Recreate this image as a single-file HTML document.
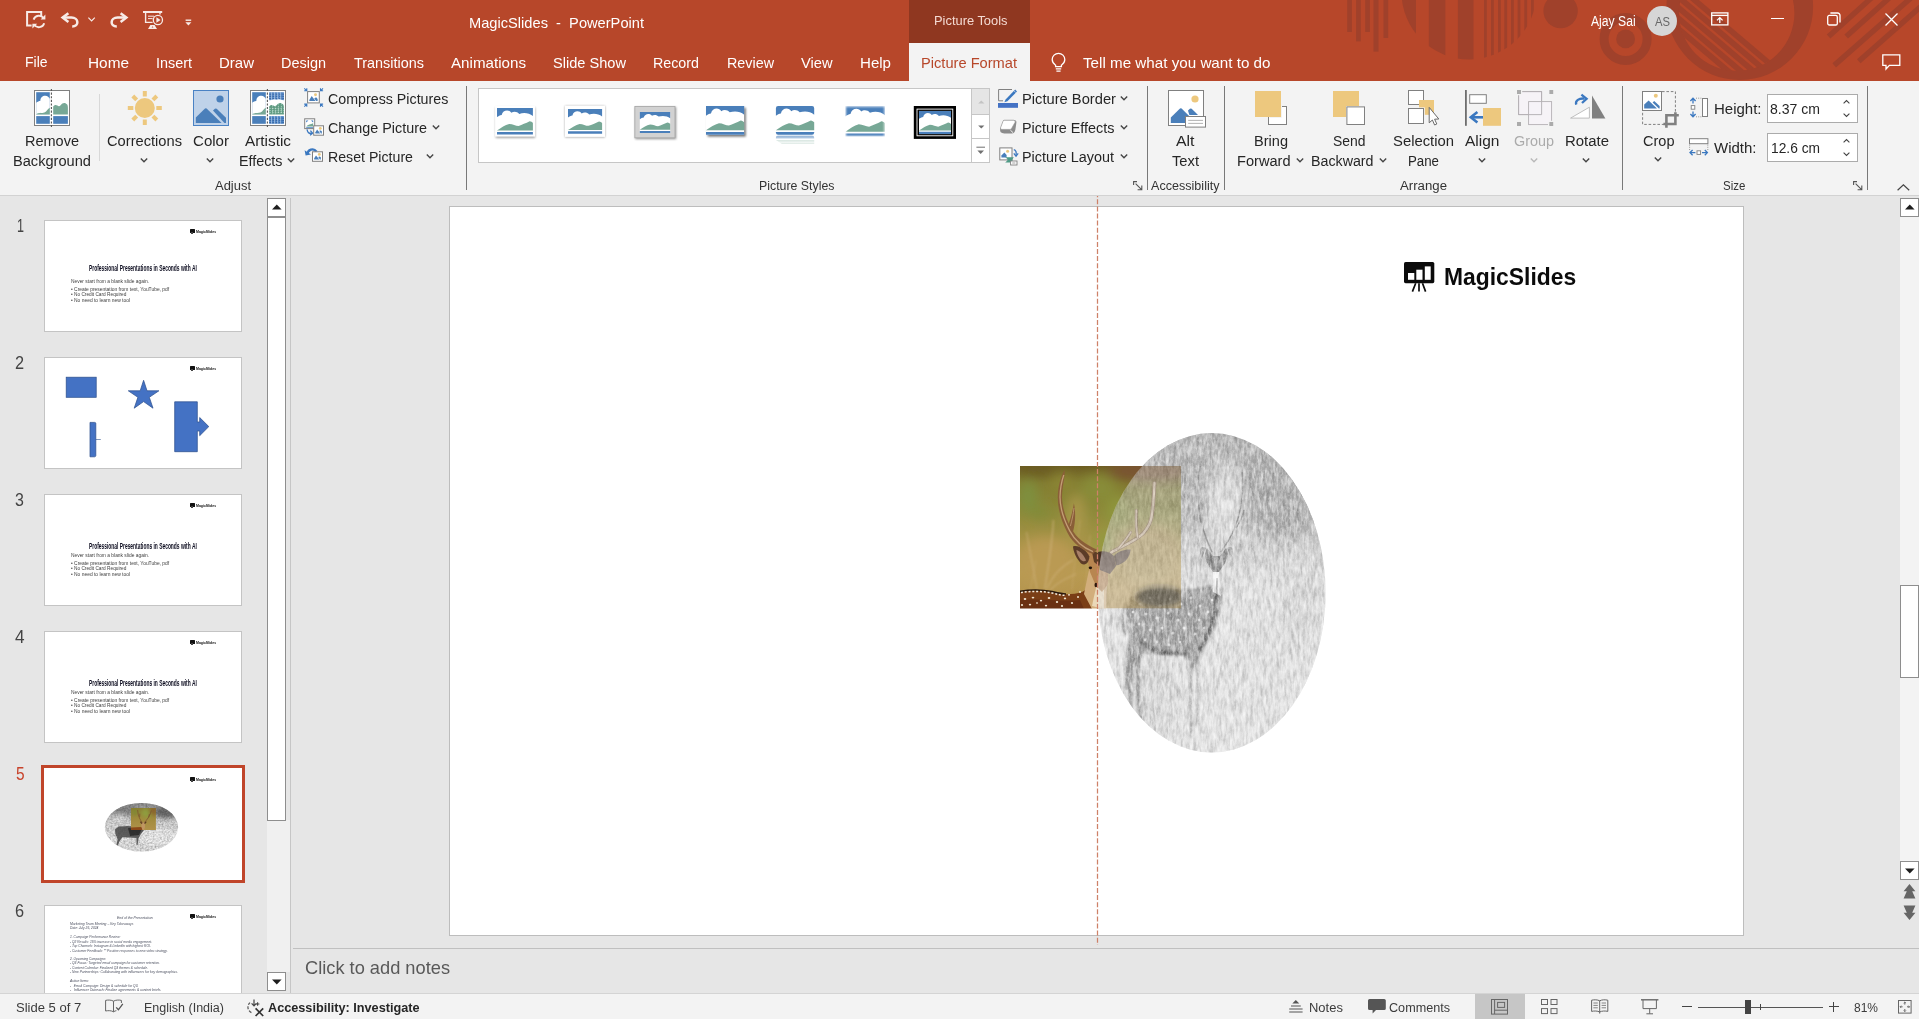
<!DOCTYPE html><html lang="en"><head><meta charset="utf-8"><title>MagicSlides - PowerPoint</title><style>
html,body{margin:0;padding:0;}
body{width:1919px;height:1019px;overflow:hidden;position:relative;background:#E6E6E6;font-family:"Liberation Sans", sans-serif;}
#app{position:absolute;left:0;top:0;width:1919px;height:1019px;overflow:hidden;}
#app div,#app svg,#app span{position:absolute;}
#app span.t{white-space:pre;line-height:1;transform-origin:0 0;display:block;}
svg{overflow:visible;}
svg text{font-family:"Liberation Sans", sans-serif;}

</style></head><body><div id="app">
<div style="left:0px;top:0px;width:1919px;height:81px;background:#B7472A;"></div>
<svg style="left:0;top:0" width="1919" height="80" viewBox="0 0 1919 80"><clipPath id="tb"><rect x="0" y="0" width="1919" height="80"/></clipPath><g clip-path="url(#tb)" fill="#A0412B"><rect x="1347.2" y="0" width="4.7" height="32"/><rect x="1356.1" y="0" width="4.7" height="41.4"/><rect x="1365.2" y="0" width="4.7" height="32"/><rect x="1373.5" y="0" width="5.0" height="51.6"/><rect x="1383.5" y="0" width="4.7" height="38"/><clipPath id="hd"><circle cx="1469" cy="-8" r="67.5"/></clipPath><g clip-path="url(#hd)"><rect x="1400" y="0" width="16.0" height="70"/><rect x="1428.8" y="0" width="16.6" height="70"/><rect x="1457.9" y="0" width="15.6" height="70"/><rect x="1484" y="0" width="2.8" height="70"/><rect x="1491" y="0" width="2.8" height="70"/><rect x="1498" y="0" width="2.8" height="70"/><rect x="1504.3" y="0" width="2.8" height="70"/><rect x="1511" y="0" width="2.8" height="70"/><rect x="1517.6" y="0" width="2.8" height="70"/><rect x="1524.3" y="0" width="2.8" height="70"/><rect x="1531" y="0" width="2.8" height="70"/></g><circle cx="1560.6" cy="11" r="17.2"/><circle cx="1625.6" cy="38.9" r="21.5" fill="none" stroke="#A0412B" stroke-width="9"/><circle cx="1625.6" cy="38.9" r="9.4"/><path fill-rule="evenodd" d="M1666.5 6.6a73.3 73.3 0 1 0 146.6 0a73.3 73.3 0 1 0 -146.6 0ZM1679 13.1a57.7 57.7 0 1 0 115.4 0a57.7 57.7 0 1 0 -115.4 0Z"/><clipPath id="br"><circle cx="1736.7" cy="13.1" r="58"/></clipPath><g clip-path="url(#br)"><path d="M1651.1 -36.8L1796.0 86.1" stroke="#A0412B" stroke-width="5.7" fill="none"/><path d="M1645.8 -30.6L1790.7 92.2" stroke="#A0412B" stroke-width="5.7" fill="none"/><path d="M1640.6 -24.5L1785.5 98.4" stroke="#A0412B" stroke-width="5.7" fill="none"/><path d="M1635.3 -18.3L1780.2 104.6" stroke="#A0412B" stroke-width="5.7" fill="none"/><path d="M1630.1 -12.1L1775.0 110.8" stroke="#A0412B" stroke-width="5.7" fill="none"/></g><path d="M1828.6 36.6L1872 -2.6" stroke="#A0412B" stroke-width="5.4" fill="none"/><path d="M1846.2 36.6L1891 -3.6" stroke="#A0412B" stroke-width="5.4" fill="none"/><path d="M1834.2 65.4L1912 -3" stroke="#A0412B" stroke-width="5.4" fill="none"/><path d="M1858.8 61.2L1922 5.4" stroke="#A0412B" stroke-width="5.4" fill="none"/></g></svg>
<div style="left:909px;top:0px;width:121px;height:43px;background:#8F3720;"></div>
<div style="left:909px;top:43px;width:121px;height:38px;background:#F3F3F3;"></div>
<div style="left:0px;top:81px;width:1919px;height:114px;background:#F3F3F3;"></div>
<div style="left:0px;top:195px;width:1919px;height:1px;background:#D2D2D2;"></div>
<div style="left:290px;top:198px;width:1px;height:795px;background:#C6C6C6;"></div>
<div style="left:267px;top:820px;width:23px;height:152px;background:#F0F0F0;"></div>
<div style="left:267px;top:198px;width:17px;height:17px;background:#fff;border:1px solid #8E8E8E;"></div>
<svg style="left:272px;top:204px;" width="10" height="6" viewBox="0 0 10 6"><path d="M0 5.4L4.8 0.4L9.6 5.4Z" fill="#1E1E1E"/></svg>
<div style="left:267px;top:216.5px;width:17px;height:602px;background:#fff;border:1px solid #8E8E8E;"></div>
<div style="left:267px;top:972px;width:17px;height:17px;background:#fff;border:1px solid #8E8E8E;"></div>
<svg style="left:272px;top:978.5px;" width="10" height="6" viewBox="0 0 10 6"><path d="M0 0.4L4.8 5.4L9.6 0.4Z" fill="#1E1E1E"/></svg>
<div style="left:44px;top:220px;width:196px;height:110px;background:#fff;border:1px solid #C4C4C4;"></div>
<div style="left:190px;top:229px;width:4.6px;height:3.6px;background:#111;border-radius:0.5px;"></div>
<div style="left:191.3px;top:232.4px;width:2px;height:1.3px;background:#444;"></div>
<div style="left:44px;top:357px;width:196px;height:110px;background:#fff;border:1px solid #C4C4C4;"></div>
<div style="left:190px;top:366px;width:4.6px;height:3.6px;background:#111;border-radius:0.5px;"></div>
<div style="left:191.3px;top:369.4px;width:2px;height:1.3px;background:#444;"></div>
<div style="left:44px;top:494px;width:196px;height:110px;background:#fff;border:1px solid #C4C4C4;"></div>
<div style="left:190px;top:503px;width:4.6px;height:3.6px;background:#111;border-radius:0.5px;"></div>
<div style="left:191.3px;top:506.4px;width:2px;height:1.3px;background:#444;"></div>
<div style="left:44px;top:631px;width:196px;height:110px;background:#fff;border:1px solid #C4C4C4;"></div>
<div style="left:190px;top:640px;width:4.6px;height:3.6px;background:#111;border-radius:0.5px;"></div>
<div style="left:191.3px;top:643.4px;width:2px;height:1.3px;background:#444;"></div>
<div style="left:41px;top:765px;width:198px;height:112px;background:#fff;border:3px solid #C0452A;"></div>
<div style="left:190px;top:777px;width:4.6px;height:3.6px;background:#111;border-radius:0.5px;"></div>
<div style="left:191.3px;top:780.4px;width:2px;height:1.3px;background:#444;"></div>
<div style="left:44px;top:905px;width:196px;height:110px;background:#fff;border:1px solid #C4C4C4;"></div>
<div style="left:190px;top:914px;width:4.6px;height:3.6px;background:#111;border-radius:0.5px;"></div>
<div style="left:191.3px;top:917.4px;width:2px;height:1.3px;background:#444;"></div>
<svg style="left:44px;top:357px;" width="198" height="112" viewBox="0 0 198 112"><g fill="#4472C4" stroke="#2F528F" stroke-width="0.75">
<rect x="22.2" y="20.2" width="30" height="20.1"/>
<path d="M99.6 23.3L103 33.8H114.9L105.3 40.3L109 51.2L99.6 44.6L90.2 51.2L93.9 40.3L84.3 33.8H96.2Z"/>
<path d="M46 65.4H50.6Q51.8 65.4 51.8 66.6V98.6Q51.8 99.6 50.6 99.8H46Z"/>
<path d="M51.8 82.5H56.8" fill="none" stroke-width="0.6"/>
<path d="M130.7 44.8H153.3V65H155.7V60.5L164.8 69.6L155.7 78.7V74H153.3V94.7H130.7Z"/></g></svg>
<svg style="left:44px;top:768px;" width="198" height="112" viewBox="0 0 198 112"><defs><filter id="tn" x="0" y="0" width="100%" height="100%"><feTurbulence type="fractalNoise" baseFrequency="0.55" numOctaves="2" seed="4"/><feColorMatrix type="matrix" values="0 0 0 0 0  0 0 0 0 0  0 0 0 0 0  1.3 1.0 0 0 -0.85"/><feGaussianBlur stdDeviation="0.45"/></filter>
<filter id="tb1" x="-20%" y="-20%" width="140%" height="140%"><feGaussianBlur stdDeviation="0.7"/></filter>
<filter id="tb2" x="-30%" y="-30%" width="160%" height="160%"><feGaussianBlur stdDeviation="2.2"/></filter>
<clipPath id="te"><ellipse cx="97.5" cy="59.2" rx="36.6" ry="24.3"/></clipPath>
<clipPath id="tp"><rect x="87" y="39.9" width="24.9" height="22.1"/></clipPath>
<linearGradient id="tg" x1="0" y1="0" x2="0" y2="1"><stop offset="0" stop-color="#8C8C8C"/><stop offset="0.2" stop-color="#B4B4B4"/><stop offset="0.42" stop-color="#DADADA"/><stop offset="0.7" stop-color="#EAEAEA"/><stop offset="1" stop-color="#E2E2E2"/></linearGradient>
<linearGradient id="tpg" x1="0" y1="0" x2="0" y2="1"><stop offset="0" stop-color="#8A7A30"/><stop offset="0.45" stop-color="#A08A3C"/><stop offset="1" stop-color="#B0924A"/></linearGradient></defs>
<g clip-path="url(#te)"><rect x="60" y="34" width="75" height="50" fill="url(#tg)"/>
<g filter="url(#tb2)"><ellipse cx="122" cy="44" rx="12" ry="6" fill="#6E6E6E"/><ellipse cx="80" cy="42" rx="14" ry="5" fill="#8A8A8A"/><ellipse cx="75" cy="56" rx="8" ry="10" fill="#DDD"/><ellipse cx="115" cy="70" rx="18" ry="9" fill="#F2F2F2"/></g>
<rect x="60" y="34" width="75" height="50" filter="url(#tn)" fill="#000" opacity="0.3"/>
<g filter="url(#tb1)"><path d="M71 61.4L74.6 58.4L84 58L99 59.6L100 62L97 66L94.6 70L93.6 77H92.6L92.4 70L84 69.4L78.6 69L75.6 73L73.4 78.6H72.2L73.6 71L71.4 66Z" fill="#3A3A3A" opacity="0.78"/>
<path d="M84 60L98 61L95 67L86 68Z" fill="#1E1E1E" opacity="0.7"/></g></g>
<g clip-path="url(#tp)"><rect x="87" y="39.9" width="24.9" height="22.1" fill="url(#tpg)"/>
<g filter="url(#tb2)"><ellipse cx="103" cy="45" rx="6" ry="4.4" fill="#8EA040"/><ellipse cx="91" cy="44" rx="4" ry="3" fill="#7E8A36"/><ellipse cx="109" cy="43" rx="4" ry="4" fill="#8A5E2C"/></g>
<path d="M87 59.4L97.6 59L99 61L98 62.4H87Z" fill="#8A4818"/>
<path d="M97.6 54.6L100.8 54.6L101 59L100 62.2H98.6L97.4 59Z" fill="#C09662"/>
<path d="M96.4 53.6L98 55.6M102.2 53.6L100.6 55.6" stroke="#5A3A22" stroke-width="1.3" fill="none"/>
<path d="M98.4 54.6C96 52 94 48 93.6 42M100.2 54.6C103 52 106 48 107.4 42.4M95.6 49.4L95.8 45.6M104.6 49.6L105.4 46" stroke="#7E5430" stroke-width="0.8" fill="none"/></g></svg>
<div style="left:449px;top:206px;width:1293px;height:728px;background:#fff;border:1px solid #BDBDBD;"></div>
<div style="left:293px;top:948px;width:1626px;height:1px;background:#C0C0C0;"></div>
<div style="left:1900px;top:198px;width:19px;height:682px;background:#F3F3F3;"></div>
<div style="left:1900px;top:198px;width:17px;height:17px;background:#fff;border:1px solid #8E8E8E;"></div>
<svg style="left:1904.5px;top:204px;" width="10" height="6" viewBox="0 0 10 6"><path d="M0 5.4L4.8 0.4L9.6 5.4Z" fill="#1E1E1E"/></svg>
<div style="left:1900px;top:585px;width:17px;height:91px;background:#fff;border:1px solid #8E8E8E;"></div>
<div style="left:1900px;top:861px;width:17px;height:17px;background:#fff;border:1px solid #8E8E8E;"></div>
<svg style="left:1904.5px;top:867.5px;" width="10" height="6" viewBox="0 0 10 6"><path d="M0 0.4L4.8 5.4L9.6 0.4Z" fill="#1E1E1E"/></svg>
<svg style="left:1903px;top:884px;" width="13" height="15" viewBox="0 0 13 15"><path d="M6.5 0L12.4 7.2H9.2L12.4 14.6H0.6L3.8 7.2H0.6Z" fill="#666"/></svg>
<svg style="left:1903px;top:905px;" width="13" height="15" viewBox="0 0 13 15"><path d="M6.5 15L12.4 7.8H9.2L12.4 0.4H0.6L3.8 7.8H0.6Z" fill="#666"/></svg>
<svg style="left:1400px;top:258px;" width="40" height="38" viewBox="0 0 40 38"><rect x="4" y="4" width="30.3" height="21.2" rx="1.6" fill="#0B0B0B"/>
<rect x="8" y="15" width="6.3" height="6.8" fill="#fff"/><rect x="16.3" y="11.7" width="6.2" height="10.1" fill="#fff"/><rect x="24.8" y="8.4" width="5.9" height="13.4" fill="#fff"/>
<path d="M15.7 25.2L12.4 33.6M19 25.2V33.6M22.5 25.2L25.6 33.6" stroke="#0B0B0B" stroke-width="1.7" fill="none"/></svg>
<svg style="left:1000px;top:420px" width="340" height="345" viewBox="1000 420 340 345">
<defs>
<filter id="b6" x="-30%" y="-30%" width="160%" height="160%"><feGaussianBlur stdDeviation="6"/></filter>
<filter id="b3" x="-30%" y="-30%" width="160%" height="160%"><feGaussianBlur stdDeviation="3"/></filter>
<filter id="b1" x="-20%" y="-20%" width="140%" height="140%"><feGaussianBlur stdDeviation="1.1"/></filter>
<filter id="b05" x="-20%" y="-20%" width="140%" height="140%"><feGaussianBlur stdDeviation="0.5"/></filter>
<filter id="streak" x="0" y="0" width="100%" height="100%" color-interpolation-filters="sRGB">
 <feTurbulence type="fractalNoise" baseFrequency="0.3 0.07" numOctaves="2" seed="7" result="n"/>
 <feColorMatrix in="n" type="matrix" values="0 0 0 0 0  0 0 0 0 0  0 0 0 0 0  2.2 0 0 0 -0.85"/>
</filter>
<filter id="streakw" x="0" y="0" width="100%" height="100%" color-interpolation-filters="sRGB">
 <feTurbulence type="fractalNoise" baseFrequency="0.33 0.09" numOctaves="2" seed="23" result="n"/>
 <feColorMatrix in="n" type="matrix" values="0 0 0 0 1  0 0 0 0 1  0 0 0 0 1  0 2.4 0 0 -0.95"/>
</filter>
<filter id="grain" x="0" y="0" width="100%" height="100%" color-interpolation-filters="sRGB">
 <feTurbulence type="fractalNoise" baseFrequency="0.5 0.3" numOctaves="2" seed="3" result="n"/>
 <feColorMatrix in="n" type="matrix" values="0 0 0 0 1  0 0 0 0 1  0 0 0 0 1  0 0 2.4 0 -1.0"/>
</filter>
<clipPath id="cell"><ellipse cx="1211.7" cy="592.8" rx="113.9" ry="159.7"/></clipPath>
<clipPath id="cpic"><rect x="1020" y="466" width="161" height="142.5"/></clipPath>
<linearGradient id="gbg" x1="0" y1="0" x2="0" y2="1">
 <stop offset="0" stop-color="#6C5C22"/><stop offset="0.12" stop-color="#827C30"/><stop offset="0.34" stop-color="#8E8A3A"/>
 <stop offset="0.52" stop-color="#A69246"/><stop offset="0.75" stop-color="#B89A52"/><stop offset="1" stop-color="#B4924C"/>
</linearGradient>
<linearGradient id="gell" x1="0" y1="0" x2="0" y2="1">
 <stop offset="0" stop-color="#ACACAC"/><stop offset="0.24" stop-color="#B6B6B6"/><stop offset="0.36" stop-color="#CECECE"/><stop offset="0.5" stop-color="#E1E1E1"/><stop offset="1" stop-color="#E5E5E5"/>
</linearGradient>
<mask id="mpic" maskUnits="userSpaceOnUse" x="1000" y="420" width="340" height="345">
 <rect x="1000" y="420" width="340" height="345" fill="#fff"/>
 <ellipse cx="1211.7" cy="592.8" rx="113.9" ry="159.7" fill="#7C7C7C"/>
</mask>
</defs>

<!-- grey sketch ellipse -->
<g clip-path="url(#cell)">
 <rect x="1095" y="430" width="235" height="326" fill="url(#gell)"/>
 <g filter="url(#b6)" opacity="0.9">
  <ellipse cx="1285" cy="490" rx="42" ry="50" fill="#A9A9A9"/>
  <ellipse cx="1190" cy="462" rx="60" ry="22" fill="#B4B4B4"/>
  <ellipse cx="1150" cy="520" rx="22" ry="50" fill="#C2C2C2"/>
  <ellipse cx="1225" cy="505" rx="18" ry="40" fill="#E2E2E2"/>
  <ellipse cx="1270" cy="640" rx="50" ry="70" fill="#E2E2E2"/>
  <ellipse cx="1150" cy="700" rx="30" ry="40" fill="#D6D6D6"/>
  <ellipse cx="1300" cy="600" rx="20" ry="50" fill="#D8D8D8"/>
 </g>
 <!-- sketch deer body -->
 <g filter="url(#b1)">
  <path d="M1128 600C1134 592 1150 588 1168 589C1186 590 1202 588 1214 584L1222 596C1222 612 1214 632 1204 648C1200 656 1197 662 1196 668L1190 668C1188 660 1184 654 1176 654C1164 656 1150 656 1142 652C1136 664 1132 676 1131 690L1126 690C1124 672 1126 650 1130 636C1126 624 1125 610 1128 600Z" fill="#707070" opacity="0.6"/>
  <path d="M1140 640C1150 652 1170 656 1186 652" stroke="#444" stroke-width="4.5" fill="none" opacity="0.62"/>
  <path d="M1216 590C1218 612 1210 634 1198 652" stroke="#4A4A4A" stroke-width="3.4" fill="none" opacity="0.72"/>
  <path d="M1131 690C1130 704 1132 716 1136 728M1140 654C1136 680 1138 700 1142 722" stroke="#787878" stroke-width="3" fill="none" opacity="0.8"/>
  <path d="M1191 668C1190 690 1190 712 1191 738M1197 668C1198 690 1197 706 1198 726" stroke="#9A9A9A" stroke-width="2.2" fill="none" opacity="0.7"/>
  <path d="M1126 602C1122 612 1122 626 1125 636" stroke="#777" stroke-width="2.2" fill="none" opacity="0.7"/>
 </g>
<g fill="#EDEDED" opacity="0.8" filter="url(#b05)"><circle cx="1140" cy="604" r="1.6"/><circle cx="1150" cy="598" r="1.4"/><circle cx="1160" cy="606" r="1.7"/><circle cx="1170" cy="599" r="1.5"/><circle cx="1181" cy="604" r="1.6"/><circle cx="1191" cy="598" r="1.4"/><circle cx="1200" cy="606" r="1.5"/><circle cx="1146" cy="614" r="1.5"/><circle cx="1157" cy="618" r="1.6"/><circle cx="1168" cy="613" r="1.5"/><circle cx="1178" cy="620" r="1.6"/><circle cx="1189" cy="614" r="1.5"/><circle cx="1199" cy="620" r="1.5"/><circle cx="1208" cy="612" r="1.4"/><circle cx="1139" cy="624" r="1.4"/><circle cx="1150" cy="630" r="1.5"/><circle cx="1162" cy="628" r="1.5"/><circle cx="1173" cy="633" r="1.5"/><circle cx="1184" cy="628" r="1.5"/><circle cx="1195" cy="634" r="1.4"/><circle cx="1204" cy="628" r="1.3"/><circle cx="1145" cy="640" r="1.4"/><circle cx="1157" cy="642" r="1.4"/><circle cx="1169" cy="645" r="1.4"/><circle cx="1180" cy="642" r="1.3"/><circle cx="1133" cy="612" r="1.3"/><circle cx="1212" cy="600" r="1.3"/></g>
 <!-- head, neck, antlers -->
 <g filter="url(#b05)">
  <path d="M1213 572L1219 572L1221 596L1213 592Z" fill="#F6F6F6"/>
  <path d="M1207 548C1204 552 1205 560 1209 566L1213 572L1219 572L1223 566C1228 560 1229 552 1226 548L1220 556H1213Z" fill="#7A7A7A" opacity="0.8"/>
  <path d="M1206 548C1200 545 1198 550 1202 558ZM1227 548C1233 545 1235 550 1231 558Z" fill="#808080" opacity="0.8"/>
  <path d="M1212 552C1206 540 1200 520 1198 500C1197 486 1198 476 1200 466M1221 552C1230 540 1238 524 1241 506C1243 492 1243 482 1242 472M1203 526C1200 520 1199 514 1199 508M1236 528C1240 522 1243 516 1244 510" stroke="#8E8E8E" stroke-width="1.5" fill="none" opacity="0.85"/>
  <path d="M1217 578V594" stroke="#8A8A8A" stroke-width="1.4" opacity="0.7"/>
 </g>
 <rect x="1095" y="430" width="235" height="326" filter="url(#streak)" opacity="0.18"/>
 <rect x="1095" y="430" width="235" height="326" filter="url(#streakw)" opacity="0.55"/>
 <rect x="1095" y="430" width="235" height="326" filter="url(#grain)" opacity="0.35"/>
</g>

<!-- colour photo -->
<g clip-path="url(#cpic)" mask="url(#mpic)">
 <rect x="1020" y="466" width="161" height="142.5" fill="url(#gbg)"/>
 <g filter="url(#b6)">
  <ellipse cx="1028" cy="496" rx="10" ry="16" fill="#7C9240" opacity="0.85"/>
  <ellipse cx="1040" cy="512" rx="9" ry="7" fill="#7E8C3A" opacity="0.8"/>
  <ellipse cx="1098" cy="488" rx="18" ry="14" fill="#888E38" opacity="0.85"/>
  <ellipse cx="1118" cy="512" rx="12" ry="16" fill="#8E983C" opacity="0.85"/>
  <ellipse cx="1062" cy="482" rx="12" ry="10" fill="#8C8636"/>
  <ellipse cx="1150" cy="471" rx="44" ry="10" fill="#7A5230"/>
  <ellipse cx="1045" cy="468" rx="30" ry="6" fill="#6A5C22"/>
  <ellipse cx="1104" cy="542" rx="9" ry="14" fill="#929A40"/>
  <ellipse cx="1046" cy="562" rx="30" ry="24" fill="#BA9A52"/>
  <ellipse cx="1150" cy="556" rx="30" ry="30" fill="#B89C58"/>
  <ellipse cx="1076" cy="520" rx="10" ry="26" fill="#A8964A"/>
 </g>
 <ellipse cx="1160" cy="597" rx="24" ry="11" fill="#3E3014" filter="url(#b3)"/>
 <!-- dry grass stems -->
 <g stroke="#D4B884" fill="none" opacity="0.6" filter="url(#b1)">
  <path d="M1053.5 520C1052 545 1048 568 1044.8 589" stroke-width="1.5"/>
  <path d="M1026.5 532C1030 552 1034 572 1037 589M1047 589C1052 576 1062 566 1073 560M1050 590C1058 582 1066 578 1076 574" stroke-width="1.1"/>
  <path d="M1072 590C1074 565 1078 540 1080 520M1086 596C1086 575 1088 556 1090 535M1036 560C1034 572 1032 582 1030 590" stroke-width="0.8" opacity="0.7"/>
 </g>
 <!-- body -->
 <path d="M1020 592C1030 590 1042 590 1052 592C1062 595 1072 595 1082 592L1092 586L1100 600L1100 609H1020Z" fill="#7A3E16"/>
 <path d="M1020 600C1040 598 1060 602 1080 600L1084 609H1020Z" fill="#6A3012"/>
 <path d="M1020 591.4C1030 589.6 1042 589.6 1052 591.6C1058 593 1062 594 1066 594" stroke="#2A180C" stroke-width="1.6" fill="none"/>
 <path d="M1021 592.6C1030 591 1042 591 1052 593C1058 594.4 1062 595.4 1066 595.4" stroke="#F4EDE0" stroke-width="1.5" stroke-dasharray="2 1.8" fill="none"/>
 <g fill="#EFE4D0"><ellipse cx="1025" cy="599" rx="1.3" ry="0.9"/><ellipse cx="1033" cy="597.6" rx="1.3" ry="0.9"/><ellipse cx="1041" cy="600.6" rx="1.2" ry="0.9"/><ellipse cx="1049" cy="598" rx="1.3" ry="0.9"/><ellipse cx="1057" cy="602" rx="1.2" ry="0.9"/><ellipse cx="1065" cy="598.4" rx="1.2" ry="0.9"/><ellipse cx="1072" cy="603" rx="1.1" ry="0.9"/><ellipse cx="1030" cy="604.6" rx="1.2" ry="0.9"/><ellipse cx="1046" cy="605.6" rx="1.2" ry="0.9"/><ellipse cx="1062" cy="606" rx="1.1" ry="0.9"/><ellipse cx="1078" cy="597" rx="1" ry="1.1"/><ellipse cx="1037" cy="603" rx="1" ry="0.8"/><ellipse cx="1022" cy="605" rx="1.1" ry="0.9"/><ellipse cx="1069" cy="594.8" rx="1" ry="0.9"/><ellipse cx="1080" cy="592" rx="0.9" ry="1"/></g>
 <!-- neck + head -->
 <path d="M1084 594C1086 584 1088 574 1090 566L1100 560L1108 570L1106 609H1092Z" fill="#D2AE7C"/>
 <path d="M1092 606C1094 596 1096 588 1098 580L1104 584V609Z" fill="#EAD8B8"/>
 <path d="M1086 552C1090 548 1096 550 1100 556L1108 566L1108 584L1102 592L1096 586L1090 572Z" fill="#B88650"/>
 <path d="M1092 552C1096 550 1100 554 1103 560L1099 566L1094 562Z" fill="#5E3E26"/>
 <path d="M1073 546.4C1078 544.6 1086 549 1089.4 556.6C1089 563.4 1085 566 1081 563.4C1076.4 558.6 1073.4 552 1073 546.4Z" fill="#5C3C28"/>
 <path d="M1076.4 550C1080 551 1084 555 1086 560.6C1084.6 562 1082 561.4 1080 559C1078 556 1076.6 553 1076.4 550Z" fill="#A88068"/>
 <ellipse cx="1090.4" cy="567.8" rx="1.7" ry="1.4" fill="#1E120A"/><ellipse cx="1096" cy="585" rx="1.5" ry="2.2" fill="#2A160C"/>
 <!-- left antler (tapered) -->
 <path d="M1093 554C1084 551 1073 544 1067.6 533C1062 522 1057.6 510 1057.8 497C1058 486 1061 476 1064.6 469.8C1065.2 477 1062.2 487 1062 497C1062.2 508 1066.4 520 1071.2 528C1076 538 1086 545 1097 549.4Z" fill="#8A5E38"/>
 <path d="M1067.6 527C1070 521 1072.6 512 1073.9 503.2C1075.8 512 1075.6 523 1072.8 532.4Z" fill="#8A5E38"/>
 <path d="M1093 551.6C1084 548 1075 541 1069.6 530.6C1064 520 1060 508 1060 497C1060.2 488 1062 480 1063.8 475" stroke="#C9A47C" stroke-width="1.3" fill="none" opacity="0.9"/>
 <path d="M1070.4 526C1072 520 1073.4 514 1074 508" stroke="#C9A47C" stroke-width="0.9" fill="none" opacity="0.8"/>
 <!-- right antler -->
 <g fill="none" stroke-linecap="round">
  <path d="M1111 552.5C1122 546 1134 542 1142.9 533.7C1149 527 1152 520 1152.3 511.9C1153.6 502 1154 492 1154.5 482.9" stroke="#8A6844" stroke-width="3.8"/>
  <path d="M1111 552.5C1122 546 1134 542 1142.9 533.7C1149 527 1152 520 1152.3 511.9C1153.6 502 1154 492 1154.5 482.9" stroke="#DCC4A4" stroke-width="2.2"/>
  <path d="M1137.6 537C1136 528 1136 519 1136.4 510.4M1118 549C1123 543 1127.6 538 1130.6 532.2" stroke="#8A6844" stroke-width="3"/>
  <path d="M1137.6 537C1136 528 1136 519 1136.4 510.4M1118 549C1123 543 1127.6 538 1130.6 532.2" stroke="#DCC4A4" stroke-width="1.6"/>
 </g>
 <path d="M1114 556C1118 551 1126 549 1130.6 549.6C1130 557 1125 564 1116 565.6Z" fill="#4E3A2E"/>
 <path d="M1098 552C1104 550 1110 552 1114 556L1116 566L1110 574L1100 570Z" fill="#4A3428"/>
</g>
</svg>
<svg style="left:1096px;top:196px;overflow:hidden" width="3" height="749" viewBox="0 0 3 749"><path d="M1.5 -3.8V752" stroke="#CE8168" stroke-width="1.25" stroke-dasharray="5 2.1" fill="none"/></svg>
<div style="left:466px;top:86px;width:1px;height:104px;background:#787878;"></div>
<div style="left:1147px;top:86px;width:1px;height:104px;background:#787878;"></div>
<div style="left:1224px;top:86px;width:1px;height:104px;background:#787878;"></div>
<div style="left:1622px;top:86px;width:1px;height:104px;background:#787878;"></div>
<div style="left:1867px;top:86px;width:1px;height:104px;background:#787878;"></div>
<div style="left:99px;top:94px;width:1px;height:67px;background:#D8D8D8;"></div>
<svg style="left:140px;top:157.5px;" width="8" height="5" viewBox="0 0 8 5"><path d="M0.8 0.6L4 3.8L7.2 0.6" stroke="#444" fill="none" stroke-width="1.35"/></svg>
<svg style="left:206px;top:157.5px;" width="8" height="5" viewBox="0 0 8 5"><path d="M0.8 0.6L4 3.8L7.2 0.6" stroke="#444" fill="none" stroke-width="1.35"/></svg>
<svg style="left:287px;top:158.0px;" width="8" height="5" viewBox="0 0 8 5"><path d="M0.8 0.6L4 3.8L7.2 0.6" stroke="#444" fill="none" stroke-width="1.35"/></svg>
<svg style="left:431.5px;top:124.5px;" width="8" height="5" viewBox="0 0 8 5"><path d="M0.8 0.6L4 3.8L7.2 0.6" stroke="#444" fill="none" stroke-width="1.35"/></svg>
<svg style="left:426px;top:153.5px;" width="8" height="5" viewBox="0 0 8 5"><path d="M0.8 0.6L4 3.8L7.2 0.6" stroke="#444" fill="none" stroke-width="1.35"/></svg>
<svg style="left:1120px;top:95.5px;" width="8" height="5" viewBox="0 0 8 5"><path d="M0.8 0.6L4 3.8L7.2 0.6" stroke="#444" fill="none" stroke-width="1.35"/></svg>
<svg style="left:1119.5px;top:124.5px;" width="8" height="5" viewBox="0 0 8 5"><path d="M0.8 0.6L4 3.8L7.2 0.6" stroke="#444" fill="none" stroke-width="1.35"/></svg>
<svg style="left:1119.5px;top:153.5px;" width="8" height="5" viewBox="0 0 8 5"><path d="M0.8 0.6L4 3.8L7.2 0.6" stroke="#444" fill="none" stroke-width="1.35"/></svg>
<svg style="left:1295.5px;top:158.0px;" width="8" height="5" viewBox="0 0 8 5"><path d="M0.8 0.6L4 3.8L7.2 0.6" stroke="#444" fill="none" stroke-width="1.35"/></svg>
<svg style="left:1378.5px;top:158.0px;" width="8" height="5" viewBox="0 0 8 5"><path d="M0.8 0.6L4 3.8L7.2 0.6" stroke="#444" fill="none" stroke-width="1.35"/></svg>
<svg style="left:1478px;top:157.5px;" width="8" height="5" viewBox="0 0 8 5"><path d="M0.8 0.6L4 3.8L7.2 0.6" stroke="#444" fill="none" stroke-width="1.35"/></svg>
<svg style="left:1530px;top:157.5px;" width="8" height="5" viewBox="0 0 8 5"><path d="M0.8 0.6L4 3.8L7.2 0.6" stroke="#B8B8B8" fill="none" stroke-width="1.35"/></svg>
<svg style="left:1582px;top:157.5px;" width="8" height="5" viewBox="0 0 8 5"><path d="M0.8 0.6L4 3.8L7.2 0.6" stroke="#444" fill="none" stroke-width="1.35"/></svg>
<svg style="left:1654px;top:157.0px;" width="8" height="5" viewBox="0 0 8 5"><path d="M0.8 0.6L4 3.8L7.2 0.6" stroke="#444" fill="none" stroke-width="1.35"/></svg>
<div style="left:1767px;top:94px;width:89px;height:27px;background:#fff;border:1px solid #ABABAB;"></div>
<svg style="left:1843px;top:99.5px;" width="7" height="4" viewBox="0 0 7 4"><path d="M0.6 3.4L3.5 0.6L6.4 3.4" stroke="#444" fill="none" stroke-width="1.1"/></svg>
<svg style="left:1843px;top:112.5px;" width="7" height="4" viewBox="0 0 7 4"><path d="M0.6 0.6L3.5 3.4L6.4 0.6" stroke="#444" fill="none" stroke-width="1.1"/></svg>
<div style="left:1767px;top:133px;width:89px;height:27px;background:#fff;border:1px solid #ABABAB;"></div>
<svg style="left:1843px;top:138.5px;" width="7" height="4" viewBox="0 0 7 4"><path d="M0.6 3.4L3.5 0.6L6.4 3.4" stroke="#444" fill="none" stroke-width="1.1"/></svg>
<svg style="left:1843px;top:151.5px;" width="7" height="4" viewBox="0 0 7 4"><path d="M0.6 0.6L3.5 3.4L6.4 0.6" stroke="#444" fill="none" stroke-width="1.1"/></svg>
<svg style="left:1133px;top:180.5px;" width="10" height="10" viewBox="0 0 10 10"><path d="M0.6 4V0.6H4" stroke="#555" fill="none" stroke-width="1.1"/><path d="M2.6 2.6L8.6 8.6M8.8 4.6V8.8H4.6" stroke="#555" fill="none" stroke-width="1.1"/></svg>
<svg style="left:1853px;top:180.5px;" width="10" height="10" viewBox="0 0 10 10"><path d="M0.6 4V0.6H4" stroke="#555" fill="none" stroke-width="1.1"/><path d="M2.6 2.6L8.6 8.6M8.8 4.6V8.8H4.6" stroke="#555" fill="none" stroke-width="1.1"/></svg>
<svg style="left:1897px;top:184px;" width="13" height="7" viewBox="0 0 13 7"><path d="M0.6 6.2L6.4 0.8L12.2 6.2" stroke="#444" fill="none" stroke-width="1.2"/></svg>
<div style="left:478px;top:88px;width:510px;height:73px;background:#fff;border:1px solid #C6C6C6;"></div>
<div style="left:971px;top:88px;width:1px;height:75px;background:#C6C6C6;"></div>
<div style="left:972px;top:89px;width:17px;height:25px;background:#E5E5E5;"></div>
<div style="left:972px;top:114px;width:17px;height:1px;background:#C6C6C6;"></div>
<div style="left:972px;top:138px;width:17px;height:1px;background:#C6C6C6;"></div>
<div style="left:972px;top:115px;width:17px;height:23px;background:#FFFFFF;"></div>
<div style="left:972px;top:139px;width:17px;height:23px;background:#FFFFFF;"></div>
<svg style="left:977.5px;top:100px;" width="7" height="4" viewBox="0 0 7 4"><path d="M0.2 3.4L3.3 0.4L6.4 3.4Z" fill="#C4C4C4"/></svg>
<svg style="left:977.5px;top:125px;" width="7" height="4" viewBox="0 0 7 4"><path d="M0.2 0.4L3.3 3.6L6.4 0.4Z" fill="#707070"/></svg>
<svg style="left:976px;top:146px;" width="10" height="9" viewBox="0 0 10 9"><path d="M0.4 1.2H9" stroke="#707070" stroke-width="1"/><path d="M1.4 4.6H8L4.7 8Z" fill="#707070"/></svg>
<svg style="left:34px;top:90px;" width="36" height="36" viewBox="0 0 36 36"><rect x="0.5" y="0.5" width="35" height="35" fill="#fff" stroke="#808080" stroke-width="1"/>
<rect x="2.2" y="2.2" width="13.6" height="22" fill="#4A7FBA"/>
<path d="M2.2 12.8C3.6 11.4 5 11.4 6.4 10.8C6.4 7.4 9 5.6 11.4 5.8C13.6 6 15 7.2 15.8 8.8V24.2H2.2Z" fill="#fff"/>
<path d="M2.2 24.2C4 22.8 8 23.4 10.4 22.6C13 21.6 13.6 18.6 15.8 17.8V24.4H2.2Z" fill="#77A896"/>
<rect x="2.2" y="26.1" width="13.6" height="7.7" fill="#4A7FBA"/><path d="M19.2 16.6C20.2 14.8 22 14.4 23.4 15.6C24.6 16.6 25.8 16.4 26.8 15C28.4 12.6 31.4 12.2 33.2 14.6C33.8 15.6 33.9 17 33.9 18V24.4H19.2Z" fill="#77A896"/>
<rect x="19.2" y="26.1" width="14.7" height="7.7" fill="#4A7FBA"/><path d="M17.4 -1V37" stroke="#555" stroke-width="1.1" stroke-dasharray="2.1 1.5" fill="none"/></svg>
<svg style="left:250px;top:90px;" width="36" height="36" viewBox="0 0 36 36"><rect x="0.5" y="0.5" width="35" height="35" fill="#fff" stroke="#808080" stroke-width="1"/>
<rect x="2.2" y="2.2" width="13.6" height="22" fill="#4A7FBA"/>
<path d="M2.2 12.8C3.6 11.4 5 11.4 6.4 10.8C6.4 7.4 9 5.6 11.4 5.8C13.6 6 15 7.2 15.8 8.8V24.2H2.2Z" fill="#fff"/>
<path d="M2.2 24.2C4 22.8 8 23.4 10.4 22.6C13 21.6 13.6 18.6 15.8 17.8V24.4H2.2Z" fill="#77A896"/>
<rect x="2.2" y="26.1" width="13.6" height="7.7" fill="#4A7FBA"/><rect x="19.2" y="2.2" width="14.7" height="8" fill="#5B8CC8"/>
<path d="M19.2 12C21 9.6 24 8.6 27 9.8C29.6 8.6 32.6 9.6 33.9 11.6V24.4H19.2Z" fill="#fff"/>
<path d="M19.2 16.6C20.2 14.8 22 14.4 23.4 15.6C24.6 16.6 25.8 16.4 26.8 15C28.4 12.6 31.4 12.2 33.2 14.6C33.8 15.6 33.9 17 33.9 18V24.4H19.2Z" fill="#5E9A82"/>
<rect x="19.2" y="26.1" width="14.7" height="7.7" fill="#4F86C6"/>
<path d="M19.2 4.2H33.9M19.2 6.4H33.9M19.2 8.6H33.9M19.2 28.2H33.9M19.2 30.6H33.9M19.2 32.6H33.9" stroke="#1F4E8C" stroke-width="0.7" stroke-dasharray="2.2 1.1" fill="none"/>
<path d="M21.4 2.2V10M24.4 2.2V10M27.4 2.2V10M30.4 2.2V10M21.4 26.1V33.8M24.4 26.1V33.8M27.4 26.1V33.8M30.4 26.1V33.8" stroke="#CFE2F7" stroke-width="0.6" fill="none"/>
<path d="M19.2 18.4H33.9M19.2 20.6H33.9M19.2 22.6H33.9M22.4 15V24.4M25.4 15V24.4M28.4 13V24.4M31.4 13V24.4" stroke="#D6F0E4" stroke-width="0.6" stroke-dasharray="1.6 1.2" fill="none"/><path d="M17.4 -1V37" stroke="#555" stroke-width="1.1" stroke-dasharray="2.1 1.5" fill="none"/></svg>
<svg style="left:126px;top:89px;" width="38" height="38" viewBox="0 0 38 38"><g transform="translate(18.8,19)" fill="#EDC87E"><circle r="10"/><rect x="-2" y="-17" width="4" height="5.5" transform="rotate(0)"/><rect x="-2" y="-17" width="4" height="5.5" transform="rotate(45)"/><rect x="-2" y="-17" width="4" height="5.5" transform="rotate(90)"/><rect x="-2" y="-17" width="4" height="5.5" transform="rotate(135)"/><rect x="-2" y="-17" width="4" height="5.5" transform="rotate(180)"/><rect x="-2" y="-17" width="4" height="5.5" transform="rotate(225)"/><rect x="-2" y="-17" width="4" height="5.5" transform="rotate(270)"/><rect x="-2" y="-17" width="4" height="5.5" transform="rotate(315)"/></g></svg>
<svg style="left:193px;top:90px;" width="36" height="36" viewBox="0 0 36 36"><rect x="0.5" y="0.5" width="35" height="35" fill="#BFD2E9" stroke="#4A82C4" stroke-width="1"/>
<circle cx="27" cy="9" r="3.6" fill="#4A7FBA"/>
<path d="M2.8 33V27.6L12 18.6Q12.8 17.9 13.6 18.6L28.6 33Z" fill="#4A7FBA"/>
<path d="M20 20.6L21.9 18.8Q22.8 18.1 23.7 18.8L33 27.8V33H31.4Z" fill="#4A7FBA"/></svg>
<svg style="left:304px;top:88px;" width="20" height="19" viewBox="0 0 20 19"><g transform="translate(3.1,3.1)"><rect x="0.5" y="0.5" width="11.7" height="11.3" fill="#fff" stroke="#808080" stroke-width="1"/><circle cx="8.4" cy="3.7" r="1.45" fill="#EDC87E"/><path d="M2.2 10.0V8.8L4.6 4.9L8.4 10.0Z" fill="#4A7FBA"/><path d="M7.1 7.4L9.0 6.2L10.5 7.8V10.0H9.1Z" fill="#4A7FBA"/></g><path d="M0.3 0.3L2.8 2.8M0.19999999999999973 2.8H2.8V0.19999999999999973" stroke="#3B78C0" stroke-width="1.1" fill="none"/><path d="M19 0.3L16.5 2.8M19.1 2.8H16.5V0.19999999999999973" stroke="#3B78C0" stroke-width="1.1" fill="none"/><path d="M0.3 18.6L2.8 16.1M0.19999999999999973 16.1H2.8V18.700000000000003" stroke="#3B78C0" stroke-width="1.1" fill="none"/><path d="M19 18.6L16.5 16.1M19.1 16.1H16.5V18.700000000000003" stroke="#3B78C0" stroke-width="1.1" fill="none"/></svg>
<svg style="left:304px;top:118px;" width="21" height="18" viewBox="0 0 21 18"><rect x="0.7" y="0.8" width="10" height="9.8" fill="#fff" stroke="#808080" stroke-width="1"/>
<path d="M2.2 2.4H4.4L2.2 4.6ZM9.2 2.4H7L9.2 4.6Z" fill="#3B78C0"/><path d="M2.2 8.6C4 6.4 6.6 6.2 9.2 5.2V8.6Z" fill="#77A896"/><path d="M2.2 9.6H9.2" stroke="#3B78C0" stroke-width="0.8"/>
<path d="M3.2 11.4C3 14.4 5 15.6 8 15.2" stroke="#3B78C0" stroke-width="1.4" fill="none"/><path d="M6.4 12.6L8.6 15.2L6 17.2" stroke="#3B78C0" stroke-width="1.3" fill="none"/>
<g transform="translate(9.2,7.3)"><rect x="0.5" y="0.5" width="9.8" height="9.4" fill="#fff" stroke="#808080" stroke-width="1"/><circle cx="7.1" cy="3.1" r="1.45" fill="#EDC87E"/><path d="M2.2 8.100000000000001V6.900000000000001L3.9 4.2L7.1 8.100000000000001Z" fill="#4A7FBA"/><path d="M6.0 5.500000000000002L7.7 5.2L8.600000000000001 5.900000000000001V8.100000000000001H7.8Z" fill="#4A7FBA"/></g></svg>
<svg style="left:304px;top:146px;" width="21" height="17" viewBox="0 0 21 17"><path d="M3.4 8.4C3.6 3.6 9.4 1.4 12.6 5.6" stroke="#3B78C0" stroke-width="2.2" fill="none"/><path d="M0.6 4.2L1.6 9.6L7 8.4Z" fill="#3B78C0"/>
<g transform="translate(8,5.3)"><rect x="0.5" y="0.5" width="10" height="9.5" fill="#fff" stroke="#808080" stroke-width="1"/><circle cx="7.3" cy="3.1" r="1.45" fill="#EDC87E"/><path d="M2.2 8.2V6.999999999999999L4.0 4.2L7.3 8.2Z" fill="#4A7FBA"/><path d="M6.2 5.6L7.8 5.2L8.8 5.999999999999999V8.2H7.9Z" fill="#4A7FBA"/></g></svg>
<svg style="left:998px;top:88px;" width="21" height="21" viewBox="0 0 21 21"><path d="M14 1.5H0.6V12.8H5" stroke="#808080" stroke-width="1" fill="none"/>
<path d="M7.6 11.6L17.2 1.6L19 3.4L9.4 13.2L6.4 14.2Z" fill="#3B78C0"/><path d="M16 2.8L17.8 4.6" stroke="#fff" stroke-width="0.6"/>
<rect x="0" y="15" width="20" height="4.8" fill="#4472C4"/></svg>
<svg style="left:998.5px;top:118.5px;" width="19" height="16" viewBox="0 0 19 16"><path d="M4.6 1H14.6Q17.8 1 17.4 3.6L16.4 10.4Q15.8 14.4 12.6 14.4H5.2Q0.4 14.4 1.2 10Z" fill="#8C8C8C"/>
<path d="M5.2 1.2H14.4Q17 1.2 16 3.4L12.6 9.4Q12 10.4 10.6 10.4H2.8Q0.8 10.4 1.6 8.6L4 2.2Q4.4 1.2 5.2 1.2Z" fill="#fff" stroke="#8C8C8C" stroke-width="0.6"/>
<path d="M11.4 11.2L14 13.6" stroke="#fff" stroke-width="0.9"/></svg>
<svg style="left:998.5px;top:146.5px;" width="20" height="19" viewBox="0 0 20 19"><rect x="0.8" y="0.9" width="12.2" height="12" fill="#fff" stroke="#808080" stroke-width="1"/>
<circle cx="8.6" cy="4.2" r="1.5" fill="#EDC87E"/><path d="M2.4 10.6V8.6L5.4 5.6L7.6 8V10.6Z" fill="#4A7FBA"/>
<path d="M6.2 10.2H14.8L13.4 12.2V13.6L15 15.4H6.2L8.4 13.6V12Z" fill="#4E9A86"/>
<path d="M14.8 2.6C17 3 17.6 5.4 17 8" stroke="#3B78C0" stroke-width="1.3" fill="none"/><path d="M14.8 6.4L17 9.2L19.2 6.4" stroke="#3B78C0" stroke-width="1.2" fill="none"/>
<rect x="11.6" y="14" width="6.4" height="4" fill="#fff" stroke="#808080" stroke-width="0.9"/><path d="M13.2 16H16.4" stroke="#808080" stroke-width="0.7"/></svg>
<svg style="left:1168px;top:90px;" width="38" height="38" viewBox="0 0 38 38"><rect x="0.5" y="0.5" width="35" height="35" fill="#fff" stroke="#808080" stroke-width="1"/>
<circle cx="27" cy="9" r="3.6" fill="#EDC87E"/>
<path d="M2.8 33V27.6L12 18.6Q12.8 17.9 13.6 18.6L21.6 26.4V33Z" fill="#4A7FBA"/>
<path d="M20 20.6L21.9 18.8Q22.8 18.1 23.7 18.8L30 25H21.4Z" fill="#4A7FBA"/>
<rect x="17.5" y="26.5" width="20" height="10.6" fill="#fff" stroke="#808080" stroke-width="1"/>
<path d="M20.2 30.4H35M20.2 33.4H35" stroke="#A0A0A0" stroke-width="0.8"/></svg>
<svg style="left:1255px;top:91px;" width="33" height="35" viewBox="0 0 33 35"><rect x="13.5" y="15.5" width="18" height="18" fill="#fff" stroke="#808080" stroke-width="1"/><rect x="0" y="0" width="26" height="26" fill="#EDC87E"/><path d="M26 14.2V26H14.2" stroke="#F3F3F3" stroke-width="1" fill="none" transform="translate(0.5,0.5)"/></svg>
<svg style="left:1333px;top:91px;" width="33" height="35" viewBox="0 0 33 35"><rect x="0" y="0" width="26" height="26" fill="#EDC87E"/><rect x="13" y="15" width="19" height="19" fill="#F3F3F3"/><rect x="13.9" y="15.9" width="17.6" height="17.6" fill="#fff" stroke="#808080" stroke-width="1"/></svg>
<svg style="left:1408px;top:90px;" width="30" height="37" viewBox="0 0 30 37"><rect x="0.5" y="0.5" width="15" height="14" fill="#fff" stroke="#808080" stroke-width="1"/>
<rect x="11" y="10" width="15" height="14.8" fill="#EDC87E"/>
<rect x="-0.2" y="17.4" width="17" height="17" fill="#F3F3F3"/>
<rect x="0.5" y="18.5" width="15" height="15" fill="#fff" stroke="#808080" stroke-width="1"/>
<path d="M21.4 17.6V33L24.6 30.2L26.8 35.2L29 34.2L26.8 29.4L31 29.2Z" fill="#fff" stroke="#6A6A6A" stroke-width="1" transform="translate(-0.2,-0.2)"/></svg>
<svg style="left:1465px;top:90px;" width="37" height="36" viewBox="0 0 37 36"><rect x="0" y="0" width="1.8" height="35.8" fill="#6E6E6E"/>
<rect x="4.7" y="4.7" width="16.6" height="8.6" fill="#fff" stroke="#808080" stroke-width="1"/>
<rect x="18" y="18" width="18" height="17.8" fill="#EDC87E"/>
<path d="M18 27.3H7.4" stroke="#3B78C0" stroke-width="2.6" fill="none"/><path d="M12.4 22L5.8 27.3L12.4 32.6" stroke="#3B78C0" stroke-width="2.6" fill="none"/></svg>
<svg style="left:1517px;top:90px;" width="37" height="36" viewBox="0 0 37 36"><rect x="1.6" y="1.6" width="23" height="23" fill="#F6F3F7" stroke="#B4B0B4" stroke-width="0.9"/>
<rect x="11.6" y="11.6" width="23" height="23" fill="#F6F3F7" fill-opacity="0.8" stroke="#B4B0B4" stroke-width="0.9"/>
<path d="M1.6 1.6H24.6V24.6H1.6Z" fill="none" stroke="#B4B0B4" stroke-width="0.9"/>
<g fill="#ABABAB"><rect x="0" y="0" width="4" height="4"/><rect x="32.2" y="0" width="4" height="4"/><rect x="0" y="32" width="4" height="4"/><rect x="32.2" y="32" width="4" height="4"/></g>
<g fill="#F3F3F3"><rect x="4" y="0" width="1.2" height="4"/><rect x="0" y="4" width="4" height="1.2"/><rect x="31" y="0" width="1.2" height="4"/><rect x="32.2" y="4" width="4" height="1.2"/><rect x="4" y="32" width="1.2" height="4"/><rect x="0" y="30.8" width="4" height="1.2"/><rect x="31" y="32" width="1.2" height="4"/><rect x="32.2" y="30.8" width="4" height="1.2"/></g></svg>
<svg style="left:1569px;top:92px;" width="38" height="28" viewBox="0 0 38 28"><path d="M23 3.5V26.6H36.4Z" fill="#808080"/><path d="M1.6 26.1H20.4V15.2Z" fill="#fff" stroke="#B8B8B8" stroke-width="0.9"/>
<path d="M7.2 12.6C6 8.6 10 6 15.4 6.6" stroke="#3B78C0" stroke-width="2.3" fill="none"/><path d="M12.4 2.6L17.6 6.8L13 11" stroke="#3B78C0" stroke-width="2.3" fill="none"/></svg>
<svg style="left:1642px;top:91px;" width="38" height="38" viewBox="0 0 38 38"><path d="M20 0.6H33.4V33.4H0.6V20" stroke="#808080" stroke-width="1" stroke-dasharray="2.6 1.8" fill="none"/>
<rect x="0.5" y="0.5" width="19" height="19" fill="#fff" stroke="#808080" stroke-width="1"/>
<circle cx="13.8" cy="4.8" r="2" fill="#EDC87E"/><path d="M2.2 17.6V13.6L6.6 9.4L15 17.6Z" fill="#4A7FBA"/><path d="M10.6 11.4L12.2 10L17.6 15V17.6H16.8Z" fill="#4A7FBA"/>
<path d="M24.4 36.8V24.2H36.8M21.4 33H33.4V21.2" stroke="#808080" stroke-width="2.6" fill="none"/></svg>
<svg style="left:1689px;top:97px;" width="20" height="21" viewBox="0 0 20 21"><path d="M4 1.6V6.6M1.4 4L4 1.2L6.6 4M4 19.4V14.4M1.4 17L4 19.8L6.6 17" stroke="#3B78C0" stroke-width="1.3" fill="none"/>
<rect x="2.2" y="8.6" width="3.6" height="3.6" fill="#fff" stroke="#808080" stroke-width="0.9"/>
<path d="M7 1.2H13M7 19.8H13" stroke="#808080" stroke-width="0.8" stroke-dasharray="1 1.2"/>
<rect x="13.5" y="1.5" width="5" height="18" fill="#fff" stroke="#808080" stroke-width="1"/></svg>
<svg style="left:1689px;top:138px;" width="20" height="19" viewBox="0 0 20 19"><rect x="0.5" y="0.7" width="18.4" height="5" fill="#fff" stroke="#808080" stroke-width="1"/>
<path d="M0.6 6.6V12M18.8 6.6V12" stroke="#808080" stroke-width="0.8" stroke-dasharray="1 1.2"/>
<path d="M1 14.6H6.4M3.6 12L1 14.6L3.6 17.2M18.4 14.6H13M15.8 12L18.4 14.6L15.8 17.2" stroke="#3B78C0" stroke-width="1.3" fill="none"/>
<rect x="8" y="12.8" width="3.6" height="3.6" fill="#fff" stroke="#808080" stroke-width="0.9"/></svg>
<svg style="left:0;top:0" width="1919" height="200" viewBox="0 0 1919 200"><clipPath id="gc"><rect x="479" y="89" width="492" height="73"/></clipPath><g clip-path="url(#gc)"><defs><filter id="gs" x="-20%" y="-20%" width="140%" height="150%"><feGaussianBlur stdDeviation="1"/></filter><filter id="gb" x="-10%" y="-10%" width="120%" height="120%"><feGaussianBlur stdDeviation="0.9"/></filter><linearGradient id="rf" x1="0" y1="0" x2="0" y2="1"><stop offset="0" stop-color="#fff" stop-opacity="0.35"/><stop offset="1" stop-color="#fff" stop-opacity="1"/></linearGradient></defs><rect x="495.6" y="107.4" width="39.6" height="30.6" fill="#000" opacity="0.35" filter="url(#gs)"/><rect x="495.1" y="105.7" width="40" height="30.9" fill="#fff"/><g transform="translate(497,108.1)"><rect x="0" y="0" width="35.9" height="26.5" rx="0" fill="#fff"/><path d="M0 0Q0 0 0 0H35.9Q35.9 0 35.9 0V7.95C32.31 4.77 26.57 4.24 22.26 5.83C20.10 3.18 16.51 3.18 14.36 4.77C12.21 1.06 5.74 1.59 4.67 6.89C2.87 7.16 1.44 7.95 0 9.01Z" fill="#4A7FBA"/><path d="M0 22.39C4.31 19.61 7.90 16.96 12.21 15.90C15.80 15.90 18.67 18.02 21.54 18.02C25.13 16.43 28.72 15.37 32.67 13.25C34.10 13.25 35.18 14.31 35.9 14.84V22.39Z" fill="#77A896"/><path d="M0 23.85H35.9V26.5Q35.9 26.5 35.9 26.5H0Q0 26.5 0 26.5Z" fill="#4A7FBA"/></g><rect x="565" y="105.9" width="40" height="31.4" fill="#000" opacity="0.38" filter="url(#gs)"/><rect x="564.9" y="105.6" width="40.1" height="31.3" fill="#fff"/><g transform="translate(568,109)"><rect x="0" y="0" width="34.1" height="24.8" rx="0" fill="#fff"/><path d="M0 0Q0 0 0 0H34.1Q34.1 0 34.1 0V7.44C30.69 4.46 25.23 3.97 21.14 5.46C19.10 2.98 15.69 2.98 13.64 4.46C11.59 0.99 5.46 1.49 4.43 6.45C2.73 6.70 1.36 7.44 0 8.43Z" fill="#4A7FBA"/><path d="M0 20.96C4.09 18.35 7.50 15.87 11.59 14.88C15.00 14.88 17.73 16.86 20.46 16.86C23.87 15.38 27.28 14.38 31.03 12.40C32.40 12.40 33.42 13.39 34.1 13.89V20.96Z" fill="#77A896"/><path d="M0 22.32H34.1V24.8Q34.1 24.8 34.1 24.8H0Q0 24.8 0 24.8Z" fill="#4A7FBA"/></g><rect x="635.2" y="107" width="41" height="32.2" fill="#000" opacity="0.4" filter="url(#gs)"/><rect x="634.4" y="106" width="41" height="32.2" fill="#ABABAB"/><rect x="635.3" y="106.9" width="39.2" height="30.4" fill="#D2D2D2"/><g transform="translate(639.8,112)"><rect x="0" y="0" width="30.4" height="21" rx="0" fill="#fff"/><path d="M0 0Q0 0 0 0H30.4Q30.4 0 30.4 0V6.30C27.36 3.78 22.50 3.36 18.85 4.62C17.02 2.52 13.98 2.52 12.16 3.78C10.34 0.84 4.86 1.26 3.95 5.46C2.43 5.67 1.22 6.30 0 7.14Z" fill="#4A7FBA"/><path d="M0 17.75C3.65 15.54 6.69 13.44 10.34 12.60C13.38 12.60 15.81 14.28 18.24 14.28C21.28 13.02 24.32 12.18 27.66 10.50C28.88 10.50 29.79 11.34 30.4 11.76V17.75Z" fill="#77A896"/><path d="M0 18.90H30.4V21Q30.4 21 30.4 21H0Q0 21 0 21Z" fill="#4A7FBA"/></g><rect x="707.6" y="107.8" width="38.2" height="28.8" fill="#000" opacity="0.55" filter="url(#gs)"/><g transform="translate(706,106)"><rect x="0" y="0" width="38.2" height="28.8" rx="0" fill="#fff"/><path d="M0 0Q0 0 0 0H38.2Q38.2 0 38.2 0V8.64C34.38 5.18 28.27 4.61 23.68 6.34C21.39 3.46 17.57 3.46 15.28 5.18C12.99 1.15 6.11 1.73 4.97 7.49C3.06 7.78 1.53 8.64 0 9.79Z" fill="#4A7FBA"/><path d="M0 24.34C4.58 21.31 8.40 18.43 12.99 17.28C16.81 17.28 19.86 19.58 22.92 19.58C26.74 17.86 30.56 16.70 34.76 14.40C36.29 14.40 37.44 15.55 38.2 16.13V24.34Z" fill="#77A896"/><path d="M0 25.92H38.2V28.8Q38.2 28.8 38.2 28.8H0Q0 28.8 0 28.8Z" fill="#4A7FBA"/></g><g transform="translate(775.9,106)"><rect x="0" y="0" width="38.3" height="28.8" rx="2.2" fill="#fff"/><path d="M0 2.2Q0 0 2.2 0H36.099999999999994Q38.3 0 38.3 2.2V8.64C34.47 5.18 28.34 4.61 23.75 6.34C21.45 3.46 17.62 3.46 15.32 5.18C13.02 1.15 6.13 1.73 4.98 7.49C3.06 7.78 1.53 8.64 0 9.79Z" fill="#4A7FBA"/><path d="M0 24.34C4.60 21.31 8.43 18.43 13.02 17.28C16.85 17.28 19.92 19.58 22.98 19.58C26.81 17.86 30.64 16.70 34.85 14.40C36.38 14.40 37.53 15.55 38.3 16.13V24.34Z" fill="#77A896"/><path d="M0 25.92H38.3V26.6Q38.3 28.8 36.099999999999994 28.8H2.2Q0 28.8 0 26.6Z" fill="#4A7FBA"/></g><clipPath id="rc"><rect x="775" y="135.4" width="41" height="8.4"/></clipPath><g clip-path="url(#rc)"><g transform="translate(775.9,164.4) scale(1,-1)"><rect x="0" y="0" width="38.3" height="28.8" rx="2.2" fill="#fff"/><path d="M0 2.2Q0 0 2.2 0H36.099999999999994Q38.3 0 38.3 2.2V8.64C34.47 5.18 28.34 4.61 23.75 6.34C21.45 3.46 17.62 3.46 15.32 5.18C13.02 1.15 6.13 1.73 4.98 7.49C3.06 7.78 1.53 8.64 0 9.79Z" fill="#4A7FBA"/><path d="M0 24.34C4.60 21.31 8.43 18.43 13.02 17.28C16.85 17.28 19.92 19.58 22.98 19.58C26.81 17.86 30.64 16.70 34.85 14.40C36.38 14.40 37.53 15.55 38.3 16.13V24.34Z" fill="#77A896"/><path d="M0 25.92H38.3V26.6Q38.3 28.8 36.099999999999994 28.8H2.2Q0 28.8 0 26.6Z" fill="#4A7FBA"/></g><rect x="775" y="135" width="40.2" height="9" fill="url(#rf)"/></g><g transform="translate(845.3,106)"><rect x="0" y="0" width="39.7" height="30.6" rx="0" fill="#fff"/><path d="M0 0Q0 0 0 0H39.7Q39.7 0 39.7 0V9.18C35.73 5.51 29.38 4.90 24.61 6.73C22.23 3.67 18.26 3.67 15.88 5.51C13.50 1.22 6.35 1.84 5.16 7.96C3.18 8.26 1.59 9.18 0 10.40Z" fill="#4A7FBA"/><path d="M0 25.86C4.76 22.64 8.73 19.58 13.50 18.36C17.47 18.36 20.64 20.81 23.82 20.81C27.79 18.97 31.76 17.75 36.13 15.30C37.72 15.30 38.91 16.52 39.7 17.14V25.86Z" fill="#77A896"/><path d="M0 27.54H39.7V30.6Q39.7 30.6 39.7 30.6H0Q0 30.6 0 30.6Z" fill="#4A7FBA"/></g><rect x="844.6" y="105.3" width="41.1" height="32" fill="none" stroke="#fff" stroke-width="2.6" filter="url(#gb)"/><rect x="913.8" y="106" width="42.2" height="32.9" fill="#000"/><rect x="917" y="109.1" width="35.8" height="26.7" fill="none" stroke="#fff" stroke-width="0.9"/><g transform="translate(919,110.9)"><rect x="0" y="0" width="32" height="23.2" rx="0" fill="#fff"/><path d="M0 0Q0 0 0 0H32Q32 0 32 0V6.96C28.80 4.18 23.68 3.71 19.84 5.10C17.92 2.78 14.72 2.78 12.80 4.18C10.88 0.93 5.12 1.39 4.16 6.03C2.56 6.26 1.28 6.96 0 7.89Z" fill="#4A7FBA"/><path d="M0 19.60C3.84 17.17 7.04 14.85 10.88 13.92C14.08 13.92 16.64 15.78 19.20 15.78C22.40 14.38 25.60 13.46 29.12 11.60C30.40 11.60 31.36 12.53 32 12.99V19.60Z" fill="#77A896"/><path d="M0 20.88H32V23.2Q32 23.2 32 23.2H0Q0 23.2 0 23.2Z" fill="#4A7FBA"/></g></g></svg>
<div style="left:0px;top:993px;width:1919px;height:26px;background:#F3F3F3;"></div>
<div style="left:0px;top:993px;width:1919px;height:1px;background:#D4D4D4;"></div>
<svg style="left:105px;top:999px;" width="19" height="15" viewBox="0 0 19 15"><path d="M8.5 2.2V12.8M8.5 2.2C6.5 0.9 3 0.8 0.6 1.4V12C3 11.4 6.5 11.5 8.5 12.8C9.6 12 10.6 11.8 11.4 11.7" stroke="#666" fill="none" stroke-width="1"/>
<path d="M8.5 2.2C10.5 0.9 14 0.8 16.4 1.4V4" stroke="#666" fill="none" stroke-width="1"/><path d="M11.2 8.4L13.4 10.8L17.8 4.8" stroke="#555" fill="none" stroke-width="1.3"/></svg>
<svg style="left:246px;top:999px;" width="19" height="18" viewBox="0 0 19 18"><path d="M5.4 13.6A6 6 0 0 1 4 3.6" stroke="#555" fill="none" stroke-width="1.2" stroke-dasharray="3 1.6"/>
<path d="M8 0.6V6.4M5.6 4.4L8 6.8L10.4 4.4" stroke="#444" fill="none" stroke-width="1.2"/>
<path d="M11.6 3.2V6.8M9.8 5H13.4" stroke="#444" fill="none" stroke-width="1.1"/>
<path d="M9.6 9.4L17.2 17M17.2 9.4L9.6 17" stroke="#333" fill="none" stroke-width="1.7"/></svg>
<svg style="left:1288.5px;top:1000px;" width="14" height="13" viewBox="0 0 14 13"><path d="M6.8 0L10.3 3.4H3.3Z" fill="#555"/><path d="M2 6H11.8M0.2 9H13.6M0.2 12H13.6" stroke="#555" stroke-width="1.1" fill="none"/></svg>
<svg style="left:1368px;top:999px;" width="18" height="15" viewBox="0 0 18 15"><path d="M1.6 0H16.2Q17.8 0 17.8 1.6V9.4Q17.8 11 16.2 11H8L4.6 14.6V11H1.6Q0 11 0 9.4V1.6Q0 0 1.6 0Z" fill="#555"/></svg>
<div style="left:1475px;top:994px;width:50px;height:25px;background:#C6C6C6;"></div>
<svg style="left:1491px;top:999px;" width="17" height="16" viewBox="0 0 17 16"><rect x="0.5" y="0.5" width="16" height="14.6" stroke="#666" fill="none" stroke-width="1"/><path d="M3.6 0.5V15" stroke="#666" fill="none" stroke-width="1"/><rect x="6.6" y="3.4" width="7" height="5" stroke="#666" fill="none" stroke-width="1"/><path d="M3.6 11.2H16.5" stroke="#666" fill="none" stroke-width="1"/></svg>
<svg style="left:1540.5px;top:999px;" width="17" height="16" viewBox="0 0 17 16"><rect x="0.5" y="0.5" width="6" height="5" stroke="#666" fill="none" stroke-width="1"/><rect x="10" y="0.5" width="6" height="5" stroke="#666" fill="none" stroke-width="1"/><rect x="0.5" y="9.6" width="6" height="5" stroke="#666" fill="none" stroke-width="1"/><rect x="10" y="9.6" width="6" height="5" stroke="#666" fill="none" stroke-width="1"/></svg>
<svg style="left:1590.5px;top:999px;" width="18" height="16" viewBox="0 0 18 16"><path d="M8.7 1.8C6.6 0.6 3 0.6 0.6 1.2V12.4C3 11.8 6.6 11.8 8.7 13C10.8 11.8 14.4 11.8 16.8 12.4V1.2C14.4 0.6 10.8 0.6 8.7 1.8ZM8.7 1.8V14.6" stroke="#666" fill="none" stroke-width="1"/>
<path d="M2.4 4H6.8M2.4 6.4H6.8M2.4 8.8H6.8M10.6 4H15M10.6 6.4H15M10.6 8.8H15" stroke="#777" stroke-width="0.9" fill="none"/></svg>
<svg style="left:1640.5px;top:999px;" width="18" height="16" viewBox="0 0 18 16"><path d="M0 0.8H17.4" stroke="#666" stroke-width="1.4"/><path d="M2 1V9.6H15.4V1" stroke="#666" fill="none" stroke-width="1"/><path d="M8.7 9.6V14.6M5.4 14.8H12" stroke="#666" fill="none" stroke-width="1"/></svg>
<div style="left:1682px;top:1006px;width:9.5px;height:1px;background:#444;"></div>
<div style="left:1698px;top:1006.5px;width:125px;height:1px;background:#555;"></div>
<div style="left:1760px;top:1003.8px;width:1px;height:6.6px;background:#444;"></div>
<div style="left:1745px;top:1000px;width:6px;height:13.6px;background:#444;"></div>
<div style="left:1829px;top:1006px;width:9.5px;height:1px;background:#444;"></div>
<div style="left:1833px;top:1002px;width:1px;height:9.5px;background:#444;"></div>
<svg style="left:1898px;top:1000px;" width="14" height="14" viewBox="0 0 14 14"><rect x="0.5" y="0.5" width="12.6" height="12.6" stroke="#666" fill="none" stroke-width="1"/><path d="M6.8 2V4.6M6.8 9V11.6M2 6.8H4.6M9 6.8H11.6" stroke="#666" stroke-width="1" fill="none"/>
<path d="M5.6 3.2L6.8 2L8 3.2M5.6 10.4L6.8 11.6L8 10.4M3.2 5.6L2 6.8L3.2 8M10.4 5.6L11.6 6.8L10.4 8" stroke="#666" stroke-width="0.8" fill="none"/></svg>
<div style="left:1647px;top:6px;width:30px;height:30px;border-radius:50%;background:#D6D6D6;"></div>
<svg style="left:26px;top:10px;" width="21" height="20" viewBox="0 0 21 20"><path d="M15.2 6V1.9H1.1V15.6H5.6" stroke="#F7EBE7" fill="none" stroke-width="2"/>
<path d="M7.6 9.6A5.6 5.6 0 0 1 17.6 8.2M18.2 13.2A5.6 5.6 0 0 1 8.2 14.8" stroke="#F7EBE7" fill="none" stroke-width="1.9"/>
<path d="M19.4 4.6V9.4H14.6Z" fill="#F7EBE7"/><path d="M6.4 18.6V13.8H11.2Z" fill="#F7EBE7"/></svg>
<svg style="left:61px;top:12px;" width="19" height="17" viewBox="0 0 19 17"><path d="M7.4 1.2L1.6 5.6L7.4 10" stroke="#F7EBE7" fill="none" stroke-width="2.5"/>
<path d="M2.4 5.6H10.4C18 5.6 18.4 14.6 11.2 14.6" stroke="#F7EBE7" fill="none" stroke-width="2.5"/></svg>
<svg style="left:88px;top:17.2px;" width="8" height="5" viewBox="0 0 8 5"><path d="M0.4 0.6L3.6 3.8L6.8 0.6" stroke="#F7EBE7" fill="none" stroke-width="1.2"/></svg>
<svg style="left:109px;top:12px;" width="19" height="17" viewBox="0 0 19 17"><path d="M11.6 1.2L17.4 5.6L11.6 10" stroke="#F7EBE7" fill="none" stroke-width="2.5"/>
<path d="M16.6 5.6H8.6C1 5.6 0.6 14.6 7.8 14.6" stroke="#F7EBE7" fill="none" stroke-width="2.5"/></svg>
<svg style="left:143px;top:10px;" width="21" height="20" viewBox="0 0 21 20"><path d="M0 2H19.2" stroke="#F7EBE7" stroke-width="2"/>
<path d="M2.6 2V12.4H9.6" stroke="#F7EBE7" fill="none" stroke-width="1.4"/><path d="M17 2V4.6" stroke="#F7EBE7" fill="none" stroke-width="1.4"/>
<path d="M5 6.2H11M5 8.6H9.6" stroke="#F7EBE7" fill="none" stroke-width="1"/>
<circle cx="14.9" cy="10" r="4.6" fill="#B7472A" stroke="#F7EBE7" stroke-width="1.3"/><path d="M13.4 7.2L17.6 10L13.4 12.8Z" fill="#F7EBE7"/>
<path d="M5 18.9L7.4 15.1H11.6L14 18.9Z" fill="#F7EBE7"/><path d="M8.6 17.6L9.5 16.2L10.4 17.6Z" fill="#B7472A"/></svg>
<svg style="left:185px;top:18.5px;" width="7" height="7" viewBox="0 0 7 7"><path d="M0.6 1.2H6.2" stroke="#F7EBE7" stroke-width="1.4"/><path d="M0.4 3.3H6.4L3.4 6.6Z" fill="#F7EBE7"/></svg>
<svg style="left:1050px;top:52px;" width="17" height="21" viewBox="0 0 17 21"><path d="M5.6 14.6V13.2C3.6 11.9 2.2 10 2.2 7.6A6.3 6.3 0 0 1 14.8 7.6C14.8 10 13.4 11.9 11.4 13.2V14.6Z" stroke="#fff" fill="none" stroke-width="1.3" stroke-width="1.4"/>
<path d="M5.8 16.8H11.2M6.4 19.2H10.6" stroke="#fff" fill="none" stroke-width="1.3" stroke-width="1.4"/></svg>
<svg style="left:1711px;top:12px;" width="18" height="14" viewBox="0 0 18 14"><rect x="0.7" y="0.9" width="16.2" height="12" stroke="#fff" fill="none" stroke-width="1.3" stroke-width="1.4"/><path d="M0.7 3.4H17" stroke="#fff" fill="none" stroke-width="1.3" stroke-width="1.4"/>
<path d="M8.8 11V5.8M6 8.4L8.8 5.6L11.6 8.4" stroke="#fff" fill="none" stroke-width="1.3" stroke-width="1.4"/></svg>
<div style="left:1771px;top:17.6px;width:12.5px;height:1.3px;background:#fff;"></div>
<svg style="left:1827px;top:12px;" width="14" height="14" viewBox="0 0 14 14"><rect x="0.7" y="3.4" width="9.6" height="9.6" rx="1.6" stroke="#fff" fill="none" stroke-width="1.3" stroke-width="1.4"/>
<path d="M3.4 1H10.6A2.4 2.4 0 0 1 13 3.4V10.6" stroke="#fff" fill="none" stroke-width="1.3" stroke-width="1.4"/></svg>
<svg style="left:1884.5px;top:12.5px;" width="13" height="13" viewBox="0 0 13 13"><path d="M0.5 0.5L12.5 12.5M12.5 0.5L0.5 12.5" stroke="#fff" fill="none" stroke-width="1.3" stroke-width="1.4"/></svg>
<svg style="left:1881.5px;top:54px;" width="19" height="16" viewBox="0 0 19 16"><path d="M0.8 0.8H17.8V11.4H7.4L4 15V11.4H0.8Z" stroke="#fff" fill="none" stroke-width="1.3" stroke-width="1.3"/></svg>
<span class="t" id="t0" style="left:16.5px;top:217.85px;font-size:17.5px;color:#444444;transform-origin:0 14.75px;transform:scale(0.7191,1.01);">1</span>
<span class="t" id="t1" style="left:196.2px;top:229.60px;font-size:3.9px;color:#111;font-weight:700;transform-origin:0 3.30px;transform:scale(0.8933,1.01);">MagicSlides</span>
<span class="t" id="t2" style="left:15.2px;top:354.85px;font-size:17.5px;color:#444444;transform-origin:0 14.75px;transform:scale(0.9348,1.01);">2</span>
<span class="t" id="t3" style="left:196.2px;top:366.60px;font-size:3.9px;color:#111;font-weight:700;transform-origin:0 3.30px;transform:scale(0.8933,1.01);">MagicSlides</span>
<span class="t" id="t4" style="left:15.4px;top:491.85px;font-size:17.5px;color:#444444;transform-origin:0 14.75px;transform:scale(0.9143,1.01);">3</span>
<span class="t" id="t5" style="left:196.2px;top:503.60px;font-size:3.9px;color:#111;font-weight:700;transform-origin:0 3.30px;transform:scale(0.8933,1.01);">MagicSlides</span>
<span class="t" id="t6" style="left:15px;top:628.85px;font-size:17.5px;color:#444444;transform-origin:0 14.75px;transform:scale(0.9862,1.01);">4</span>
<span class="t" id="t7" style="left:196.2px;top:640.60px;font-size:3.9px;color:#111;font-weight:700;transform-origin:0 3.30px;transform:scale(0.8933,1.01);">MagicSlides</span>
<span class="t" id="t8" style="left:15.7px;top:765.85px;font-size:17.5px;color:#C8432B;transform-origin:0 14.75px;transform:scale(0.8835,1.01);">5</span>
<span class="t" id="t9" style="left:196.2px;top:777.60px;font-size:3.9px;color:#111;font-weight:700;transform-origin:0 3.30px;transform:scale(0.8933,1.01);">MagicSlides</span>
<span class="t" id="t10" style="left:15.4px;top:902.85px;font-size:17.5px;color:#444444;transform-origin:0 14.75px;transform:scale(0.9348,1.01);">6</span>
<span class="t" id="t11" style="left:196.2px;top:914.60px;font-size:3.9px;color:#111;font-weight:700;transform-origin:0 3.30px;transform:scale(0.8933,1.01);">MagicSlides</span>
<span class="t" id="t12" style="left:89.2px;top:264.19px;font-size:8.4px;color:#0B0B1E;font-weight:700;transform-origin:0 7.11px;transform:scale(0.5844,1.01);">Professional Presentations in Seconds with AI</span>
<span class="t" id="t13" style="left:71px;top:279.82px;font-size:4.7px;color:#3C3C3C;transform-origin:0 3.98px;transform:scale(1.0394,1.01);">Never start from a blank slide again.</span>
<span class="t" id="t14" style="left:71px;top:287.92px;font-size:4.7px;color:#3C3C3C;transform-origin:0 3.98px;transform:scale(1.0478,1.01);">• Create presentation from text, YouTube, pdf</span>
<span class="t" id="t15" style="left:71px;top:292.92px;font-size:4.7px;color:#3C3C3C;transform-origin:0 3.98px;transform:scale(1.0159,1.01);">• No Credit Card Required</span>
<span class="t" id="t16" style="left:71px;top:298.92px;font-size:4.7px;color:#3C3C3C;transform-origin:0 3.98px;transform:scale(1.0466,1.01);">• No need to learn new tool</span>
<span class="t" id="t17" style="left:89.2px;top:542.19px;font-size:8.4px;color:#0B0B1E;font-weight:700;transform-origin:0 7.11px;transform:scale(0.5844,1.01);">Professional Presentations in Seconds with AI</span>
<span class="t" id="t18" style="left:71px;top:553.82px;font-size:4.7px;color:#3C3C3C;transform-origin:0 3.98px;transform:scale(1.0394,1.01);">Never start from a blank slide again.</span>
<span class="t" id="t19" style="left:71px;top:561.92px;font-size:4.7px;color:#3C3C3C;transform-origin:0 3.98px;transform:scale(1.0478,1.01);">• Create presentation from text, YouTube, pdf</span>
<span class="t" id="t20" style="left:71px;top:566.92px;font-size:4.7px;color:#3C3C3C;transform-origin:0 3.98px;transform:scale(1.0159,1.01);">• No Credit Card Required</span>
<span class="t" id="t21" style="left:71px;top:572.92px;font-size:4.7px;color:#3C3C3C;transform-origin:0 3.98px;transform:scale(1.0466,1.01);">• No need to learn new tool</span>
<span class="t" id="t22" style="left:89.2px;top:679.19px;font-size:8.4px;color:#0B0B1E;font-weight:700;transform-origin:0 7.11px;transform:scale(0.5844,1.01);">Professional Presentations in Seconds with AI</span>
<span class="t" id="t23" style="left:71px;top:690.82px;font-size:4.7px;color:#3C3C3C;transform-origin:0 3.98px;transform:scale(1.0394,1.01);">Never start from a blank slide again.</span>
<span class="t" id="t24" style="left:71px;top:698.92px;font-size:4.7px;color:#3C3C3C;transform-origin:0 3.98px;transform:scale(1.0478,1.01);">• Create presentation from text, YouTube, pdf</span>
<span class="t" id="t25" style="left:71px;top:703.92px;font-size:4.7px;color:#3C3C3C;transform-origin:0 3.98px;transform:scale(1.0159,1.01);">• No Credit Card Required</span>
<span class="t" id="t26" style="left:71px;top:709.92px;font-size:4.7px;color:#3C3C3C;transform-origin:0 3.98px;transform:scale(1.0466,1.01);">• No need to learn new tool</span>
<span class="t" id="t27" style="left:117.2px;top:916.77px;font-size:3.7px;color:#4A4E5E;font-style:italic;transform-origin:0 3.13px;transform:scale(0.9261,1.01);">End of the Presentation</span>
<span class="t" id="t28" style="left:69.6px;top:922.67px;font-size:3.7px;color:#4A4E5E;font-style:italic;transform-origin:0 3.13px;transform:scale(0.9013,1.01);">Marketing Team Meeting – Key Takeaways</span>
<span class="t" id="t29" style="left:69.6px;top:926.57px;font-size:3.7px;color:#4A4E5E;font-style:italic;transform-origin:0 3.13px;transform:scale(0.8936,1.01);">Date: July 25, 2024</span>
<span class="t" id="t30" style="left:69.6px;top:935.77px;font-size:3.7px;color:#4A4E5E;font-style:italic;transform-origin:0 3.13px;transform:scale(0.8813,1.01);">1. Campaign Performance Review:</span>
<span class="t" id="t31" style="left:69.6px;top:940.67px;font-size:3.7px;color:#4A4E5E;font-style:italic;transform-origin:0 3.13px;transform:scale(0.8831,1.01);">- Q2 Results: 15% increase in social media engagement.</span>
<span class="t" id="t32" style="left:69.6px;top:944.67px;font-size:3.7px;color:#4A4E5E;font-style:italic;transform-origin:0 3.13px;transform:scale(0.8891,1.01);">- Top Channels: Instagram &amp; LinkedIn with highest ROI.</span>
<span class="t" id="t33" style="left:69.6px;top:949.77px;font-size:3.7px;color:#4A4E5E;font-style:italic;transform-origin:0 3.13px;transform:scale(0.8966,1.01);">- Customer Feedback: ** Positive responses to new video strategy.</span>
<span class="t" id="t34" style="left:69.6px;top:957.67px;font-size:3.7px;color:#4A4E5E;font-style:italic;transform-origin:0 3.13px;transform:scale(0.8743,1.01);">2. Upcoming Campaigns:</span>
<span class="t" id="t35" style="left:69.6px;top:961.77px;font-size:3.7px;color:#4A4E5E;font-style:italic;transform-origin:0 3.13px;transform:scale(0.9027,1.01);">- Q3 Focus: Targeted email campaign for customer retention.</span>
<span class="t" id="t36" style="left:69.6px;top:966.57px;font-size:3.7px;color:#4A4E5E;font-style:italic;transform-origin:0 3.13px;transform:scale(0.8943,1.01);">- Content Calendar: Finalized Q3 themes &amp; schedule.</span>
<span class="t" id="t37" style="left:69.6px;top:970.67px;font-size:3.7px;color:#4A4E5E;font-style:italic;transform-origin:0 3.13px;transform:scale(0.9094,1.01);">- New Partnerships: Collaborating with influencers for key demographics.</span>
<span class="t" id="t38" style="left:69.6px;top:979.57px;font-size:3.7px;color:#4A4E5E;font-style:italic;transform-origin:0 3.13px;transform:scale(0.9002,1.01);">Action Items:</span>
<span class="t" id="t39" style="left:69.6px;top:984.57px;font-size:3.7px;color:#4A4E5E;font-style:italic;transform-origin:0 3.13px;transform:scale(0.8947,1.01);">-   Email Campaign: Design &amp; schedule for Q3.</span>
<span class="t" id="t40" style="left:69.6px;top:988.67px;font-size:3.7px;color:#4A4E5E;font-style:italic;transform-origin:0 3.13px;transform:scale(0.9174,1.01);">-   Influencer Outreach: Finalize agreements &amp; content briefs.</span>
<span class="t" id="t41" style="left:305.3px;top:959.80px;font-size:17.8px;color:#595959;transform-origin:0 14.90px;transform:scale(1.0259,1.01);">Click to add notes</span>
<span class="t" id="t42" style="left:1444.4px;top:265.90px;font-size:22.8px;color:#0B0B0B;font-weight:700;transform-origin:0 19.40px;transform:scale(1.0033,1.01);">MagicSlides</span>
<span class="t" id="t43" style="left:25px;top:133.55px;font-size:14.9px;color:#262626;transform-origin:0 12.45px;transform:scale(0.9738,1.01);">Remove</span>
<span class="t" id="t44" style="left:12.5px;top:153.55px;font-size:14.9px;color:#262626;transform-origin:0 12.45px;transform:scale(0.9813,1.01);">Background</span>
<span class="t" id="t45" style="left:107px;top:133.55px;font-size:14.9px;color:#262626;transform-origin:0 12.45px;transform:scale(0.9850,1.01);">Corrections</span>
<span class="t" id="t46" style="left:193px;top:133.55px;font-size:14.9px;color:#262626;transform-origin:0 12.45px;transform:scale(1.0114,1.01);">Color</span>
<span class="t" id="t47" style="left:245px;top:133.55px;font-size:14.9px;color:#262626;transform-origin:0 12.45px;transform:scale(1.0294,1.01);">Artistic</span>
<span class="t" id="t48" style="left:239px;top:153.55px;font-size:14.9px;color:#262626;transform-origin:0 12.45px;transform:scale(0.9613,1.01);">Effects</span>
<span class="t" id="t49" style="left:328px;top:91.55px;font-size:14.9px;color:#262626;transform-origin:0 12.45px;transform:scale(0.9564,1.01);">Compress Pictures</span>
<span class="t" id="t50" style="left:328px;top:120.55px;font-size:14.9px;color:#262626;transform-origin:0 12.45px;transform:scale(0.9644,1.01);">Change Picture</span>
<span class="t" id="t51" style="left:328px;top:149.55px;font-size:14.9px;color:#262626;transform-origin:0 12.45px;transform:scale(0.9509,1.01);">Reset Picture</span>
<span class="t" id="t52" style="left:215px;top:179.85px;font-size:12.3px;color:#333;transform-origin:0 10.15px;transform:scale(1.0530,1.01);">Adjust</span>
<span class="t" id="t53" style="left:759px;top:179.85px;font-size:12.3px;color:#333;transform-origin:0 10.15px;transform:scale(1.0042,1.01);">Picture Styles</span>
<span class="t" id="t54" style="left:1022px;top:91.55px;font-size:14.9px;color:#262626;transform-origin:0 12.45px;transform:scale(0.9875,1.01);">Picture Border</span>
<span class="t" id="t55" style="left:1022px;top:120.55px;font-size:14.9px;color:#262626;transform-origin:0 12.45px;transform:scale(0.9662,1.01);">Picture Effects</span>
<span class="t" id="t56" style="left:1022px;top:149.55px;font-size:14.9px;color:#262626;transform-origin:0 12.45px;transform:scale(0.9664,1.01);">Picture Layout</span>
<span class="t" id="t57" style="left:1176px;top:133.55px;font-size:14.9px;color:#262626;transform-origin:0 12.45px;transform:scale(1.0638,1.01);">Alt</span>
<span class="t" id="t58" style="left:1172px;top:153.55px;font-size:14.9px;color:#262626;transform-origin:0 12.45px;transform:scale(0.9886,1.01);">Text</span>
<span class="t" id="t59" style="left:1151px;top:179.85px;font-size:12.3px;color:#333;transform-origin:0 10.15px;transform:scale(1.0229,1.01);">Accessibility</span>
<span class="t" id="t60" style="left:1254px;top:133.55px;font-size:14.9px;color:#262626;transform-origin:0 12.45px;transform:scale(0.9780,1.01);">Bring</span>
<span class="t" id="t61" style="left:1237px;top:153.55px;font-size:14.9px;color:#262626;transform-origin:0 12.45px;transform:scale(0.9794,1.01);">Forward</span>
<span class="t" id="t62" style="left:1333px;top:133.55px;font-size:14.9px;color:#262626;transform-origin:0 12.45px;transform:scale(0.9344,1.01);">Send</span>
<span class="t" id="t63" style="left:1310.5px;top:153.55px;font-size:14.9px;color:#262626;transform-origin:0 12.45px;transform:scale(0.9558,1.01);">Backward</span>
<span class="t" id="t64" style="left:1393px;top:133.55px;font-size:14.9px;color:#262626;transform-origin:0 12.45px;transform:scale(0.9957,1.01);">Selection</span>
<span class="t" id="t65" style="left:1408px;top:153.55px;font-size:14.9px;color:#262626;transform-origin:0 12.45px;transform:scale(0.8913,1.01);">Pane</span>
<span class="t" id="t66" style="left:1465px;top:133.55px;font-size:14.9px;color:#262626;transform-origin:0 12.45px;transform:scale(1.0415,1.01);">Align</span>
<span class="t" id="t67" style="left:1514px;top:133.55px;font-size:14.9px;color:#ABABAB;transform-origin:0 12.45px;transform:scale(0.9664,1.01);">Group</span>
<span class="t" id="t68" style="left:1565px;top:133.55px;font-size:14.9px;color:#262626;transform-origin:0 12.45px;transform:scale(1.0028,1.01);">Rotate</span>
<span class="t" id="t69" style="left:1400px;top:179.85px;font-size:12.3px;color:#333;transform-origin:0 10.15px;transform:scale(1.0743,1.01);">Arrange</span>
<span class="t" id="t70" style="left:1643px;top:133.85px;font-size:14.9px;color:#262626;transform-origin:0 12.45px;transform:scale(0.9758,1.01);">Crop</span>
<span class="t" id="t71" style="left:1713.5px;top:101.75px;font-size:14.9px;color:#262626;transform-origin:0 12.45px;transform:scale(1.0066,1.01);">Height:</span>
<span class="t" id="t72" style="left:1713.5px;top:140.85px;font-size:14.9px;color:#262626;transform-origin:0 12.45px;transform:scale(1.0070,1.01);">Width:</span>
<span class="t" id="t73" style="left:1723px;top:179.85px;font-size:12.3px;color:#333;transform-origin:0 10.15px;transform:scale(0.9364,1.01);">Size</span>
<span class="t" id="t74" style="left:1770px;top:101.85px;font-size:14.9px;color:#262626;transform-origin:0 12.45px;transform:scale(0.9440,1.01);">8.37 cm</span>
<span class="t" id="t75" style="left:1771px;top:140.85px;font-size:14.9px;color:#262626;transform-origin:0 12.45px;transform:scale(0.9251,1.01);">12.6 cm</span>
<span class="t" id="t76" style="left:15.5px;top:1002.05px;font-size:12.9px;color:#3B3B3B;transform-origin:0 10.95px;transform:scale(1.0116,1.01);">Slide 5 of 7</span>
<span class="t" id="t77" style="left:144px;top:1002.05px;font-size:12.9px;color:#3B3B3B;transform-origin:0 10.95px;transform:scale(0.9708,1.01);">English (India)</span>
<span class="t" id="t78" style="left:268px;top:1002.05px;font-size:12.9px;color:#262626;font-weight:700;transform-origin:0 10.95px;transform:scale(0.9835,1.01);">Accessibility: Investigate</span>
<span class="t" id="t79" style="left:1308.5px;top:1002.05px;font-size:12.9px;color:#3B3B3B;transform-origin:0 10.95px;transform:scale(1.0063,1.01);">Notes</span>
<span class="t" id="t80" style="left:1389.4px;top:1002.05px;font-size:12.9px;color:#3B3B3B;transform-origin:0 10.95px;transform:scale(0.9787,1.01);">Comments</span>
<span class="t" id="t81" style="left:1854px;top:1002.05px;font-size:12.9px;color:#3B3B3B;transform-origin:0 10.95px;transform:scale(0.9298,1.01);">81%</span>
<span class="t" id="t82" style="left:469px;top:14.90px;font-size:15.2px;color:#FFFFFF;transform-origin:0 13.10px;transform:scale(0.9643,1.01);">MagicSlides  -  PowerPoint</span>
<span class="t" id="t83" style="left:934px;top:14.00px;font-size:13px;color:#F4DAD2;transform-origin:0 11.00px;transform:scale(0.9907,1.01);">Picture Tools</span>
<span class="t" id="t84" style="left:1591px;top:14.05px;font-size:14.5px;color:#FFFFFF;transform-origin:0 12.25px;transform:scale(0.8383,1.01);">Ajay Sai</span>
<span class="t" id="t85" style="left:1654.5px;top:15.00px;font-size:13px;color:#666666;transform-origin:0 11.00px;transform:scale(0.8649,1.01);">AS</span>
<span class="t" id="t86" style="left:25px;top:53.90px;font-size:15.2px;color:#FFFFFF;transform-origin:0 13.10px;transform:scale(0.9190,1.01);">File</span>
<span class="t" id="t87" style="left:88px;top:54.90px;font-size:15.2px;color:#FFFFFF;transform-origin:0 13.10px;transform:scale(1.0120,1.01);">Home</span>
<span class="t" id="t88" style="left:156px;top:54.90px;font-size:15.2px;color:#FFFFFF;transform-origin:0 13.10px;transform:scale(0.9478,1.01);">Insert</span>
<span class="t" id="t89" style="left:219px;top:54.90px;font-size:15.2px;color:#FFFFFF;transform-origin:0 13.10px;transform:scale(0.9872,1.01);">Draw</span>
<span class="t" id="t90" style="left:281px;top:54.90px;font-size:15.2px;color:#FFFFFF;transform-origin:0 13.10px;transform:scale(0.9518,1.01);">Design</span>
<span class="t" id="t91" style="left:354px;top:54.90px;font-size:15.2px;color:#FFFFFF;transform-origin:0 13.10px;transform:scale(0.9496,1.01);">Transitions</span>
<span class="t" id="t92" style="left:451px;top:54.90px;font-size:15.2px;color:#FFFFFF;transform-origin:0 13.10px;transform:scale(0.9981,1.01);">Animations</span>
<span class="t" id="t93" style="left:553px;top:54.90px;font-size:15.2px;color:#FFFFFF;transform-origin:0 13.10px;transform:scale(0.9607,1.01);">Slide Show</span>
<span class="t" id="t94" style="left:653px;top:54.90px;font-size:15.2px;color:#FFFFFF;transform-origin:0 13.10px;transform:scale(0.9394,1.01);">Record</span>
<span class="t" id="t95" style="left:727px;top:54.90px;font-size:15.2px;color:#FFFFFF;transform-origin:0 13.10px;transform:scale(0.9435,1.01);">Review</span>
<span class="t" id="t96" style="left:801px;top:54.90px;font-size:15.2px;color:#FFFFFF;transform-origin:0 13.10px;transform:scale(0.9646,1.01);">View</span>
<span class="t" id="t97" style="left:860px;top:54.90px;font-size:15.2px;color:#FFFFFF;transform-origin:0 13.10px;transform:scale(0.9920,1.01);">Help</span>
<span class="t" id="t98" style="left:921px;top:54.90px;font-size:15.2px;color:#B7472A;transform-origin:0 13.10px;transform:scale(0.9639,1.01);">Picture Format</span>
<span class="t" id="t99" style="left:1082.5px;top:54.50px;font-size:15.2px;color:#FFFFFF;transform-origin:0 13.10px;transform:scale(1.0004,1.01);">Tell me what you want to do</span>
</div></body></html>
